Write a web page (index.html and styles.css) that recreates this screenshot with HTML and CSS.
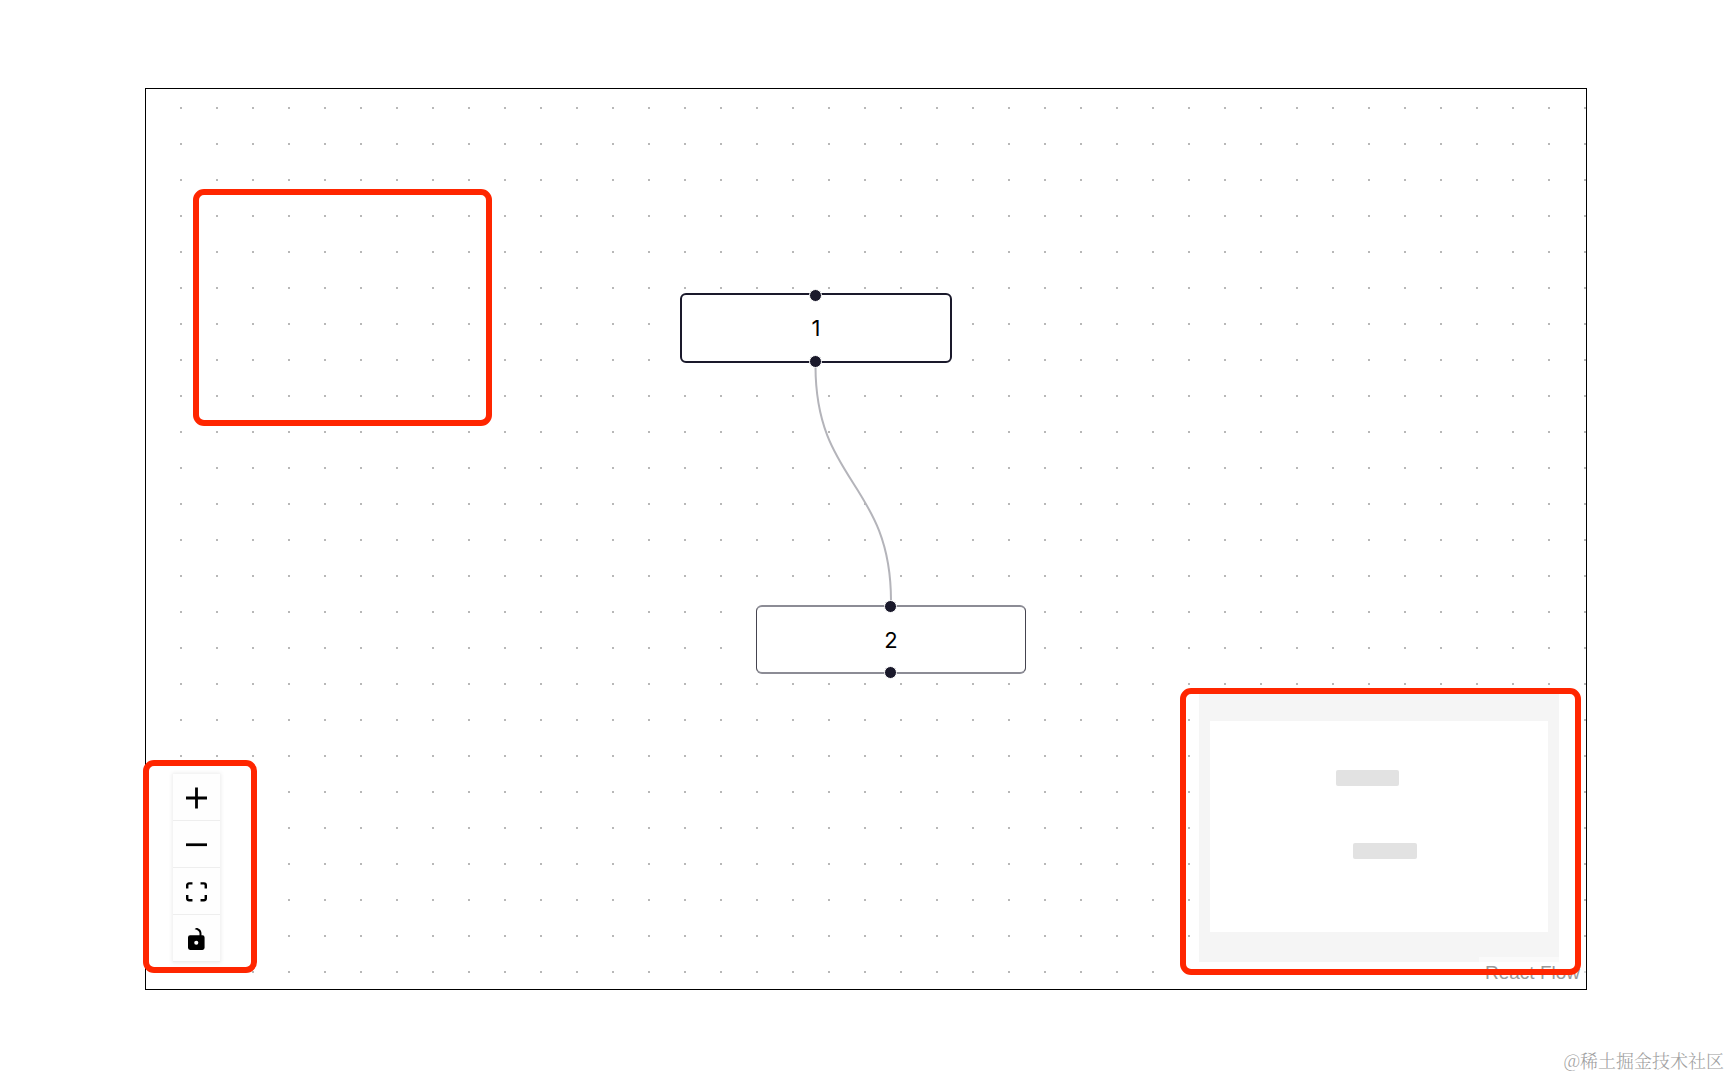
FILE: index.html
```html
<!DOCTYPE html>
<html lang="zh-CN">
<head>
<meta charset="utf-8">
<meta name="viewport" content="width=device-width, initial-scale=1">
<title>React Flow</title>
<link rel="stylesheet" href="styles.css">
</head>
<body>
<main class="page">
  <section class="flow" aria-label="Flow canvas">
    <svg class="flow-layer" aria-hidden="true">
      <defs>
        <pattern id="dots" width="36" height="36" patternUnits="userSpaceOnUse">
          <rect class="dot" x="34" y="18" width="2" height="2"/>
        </pattern>
      </defs>
      <rect width="100%" height="100%" fill="url(#dots)"/>
      <path class="edge" d="M669.500 277C669.500 394 745 394 745 512"/>
    </svg>

    <div class="node node-one selected">
      <span class="handle handle-top"></span>1<span class="handle handle-bottom"></span>
    </div>
    <div class="node node-two">
      <span class="handle handle-top"></span>2<span class="handle handle-bottom"></span>
    </div>

    <div class="controls">
      <button type="button" class="control" aria-label="zoom in">
        <svg width="21" height="22" viewBox="0 0 32 32"><path d="M32 18.133H18.133V32h-4.266V18.133H0v-4.266h13.867V0h4.266v13.867H32z"/></svg>
      </button>
      <button type="button" class="control" aria-label="zoom out">
        <svg width="21" height="4" viewBox="0 0 32 5"><path d="M0 0h32v4.2H0z"/></svg>
      </button>
      <button type="button" class="control" aria-label="fit view">
        <svg width="21" height="20" viewBox="0 0 32 30"><path d="M3.692 4.63c0-.53.4-.938.939-.938h5.215V0H4.708C2.130 0 0 2.054 0 4.630v5.216h3.692V4.631zM27.354 0h-5.200v3.692h5.170c.530 0 .984.400.984.939v5.215H32V4.631A4.624 4.624 0 0027.354 0zm.954 24.830c0 .532-.400.940-.939.940h-5.215v3.768h5.215c2.577 0 4.631-2.130 4.631-4.707v-5.139h-3.692v5.139zm-23.677.940c-.531 0-.939-.400-.939-.940v-5.138H0v5.139c0 2.577 2.130 4.707 4.708 4.707h5.138V25.770H4.631z"/></svg>
      </button>
      <button type="button" class="control" aria-label="toggle interactivity">
        <svg width="17" height="22" viewBox="0 0 25 32"><path d="M21.333 10.667H19.810V7.619C19.810 3.429 16.380 0 12.190 0c-4.114 1.828-1.370 2.133.305 2.438 1.676.305 4.420 2.590 4.420 5.181v3.048H3.047A3.056 3.056 0 000 13.714v15.238A3.056 3.056 0 003.048 32h18.285a3.056 3.056 0 003.048-3.048V13.714a3.056 3.056 0 00-3.048-3.047zM12.190 24.533a3.056 3.056 0 01-3.047-3.047 3.056 3.056 0 013.047-3.048 3.056 3.056 0 013.048 3.048 3.056 3.056 0 01-3.048 3.047z"/></svg>
      </button>
    </div>

    <svg class="minimap" width="360" height="270" viewBox="0 0 360 270" role="img" aria-label="Mini map">
      <rect class="minimap-node" x="137" y="78" width="63" height="16" rx="2"/>
      <rect class="minimap-node" x="154" y="151" width="64" height="16" rx="2"/>
      <path class="minimap-mask" fill-rule="evenodd" d="M0 0h360v270H0zM11 29h338v211H11z"/>
    </svg>

    <a class="attribution" href="https://reactflow.dev">React Flow</a>

    <div class="mark mark-empty"></div>
    <div class="mark mark-controls"></div>
    <div class="mark mark-minimap"></div>
  </section>
</main>
<footer class="watermark">@稀土掘金技术社区</footer>
</body>
</html>
```
FILE: styles.css
```css
* {
  box-sizing: border-box;
}

body {
  margin: 0;
  background: #fff;
  color: #000;
  font-family: Inter, "Liberation Sans", sans-serif;
}

.page {
  display: flex;
  min-height: 100vh;
  padding: 88px 143px 88px 145px;
}

.flow {
  position: relative;
  flex: 1;
  border: 1px solid #000;
}

.flow-layer {
  position: absolute;
  inset: 0;
  width: 100%;
  height: 100%;
}

.dot {
  fill: #b8b8b8;
}

.edge {
  fill: none;
  stroke: #b4b4ba;
  stroke-width: 2;
}

/* Nodes */
.node {
  position: absolute;
  display: flex;
  align-items: center;
  justify-content: center;
  width: 270px;
  height: 69px;
  border: solid #8c8c95;
  border-width: 2px 1px;
  border-right-color: #45444f;
  border-left-color: #45444f;
  border-radius: 6px;
  background: #fff;
  font-size: 22px;
  line-height: 28px;
}

.node.selected {
  width: 272px;
  height: 70px;
  border: 2px solid #1a192b;
}

.node-one {
  left: 534px;
  top: 204px;
}

.node-two {
  left: 610px;
  top: 516px;
}

.handle {
  position: absolute;
  left: 50%;
  width: 13px;
  height: 13px;
  margin-left: -7px;
  border: 1px solid #fff;
  border-radius: 50%;
  background: #1a192b;
}

.handle-top {
  top: -7px;
}

.selected .handle-top {
  top: -6px;
}

.handle-bottom {
  bottom: -7px;
}

/* Zoom controls */
.controls {
  position: absolute;
  left: 27px;
  bottom: 27px;
  display: flex;
  flex-direction: column;
  box-shadow: 0 0 4px 1px rgba(0, 0, 0, 0.08);
}

.control {
  display: flex;
  align-items: center;
  justify-content: center;
  width: 47px;
  height: 47px;
  padding: 1px 0 0;
  border: 0;
  border-bottom: 1px solid #eee;
  background: #fefefe;
  cursor: pointer;
}

/* Minimap and attribution */
.minimap {
  position: absolute;
  right: 27px;
  bottom: 27px;
  background: #fff;
}

.minimap-node {
  fill: #e2e2e2;
}

.minimap-mask {
  fill: #f5f5f5;
}

.attribution {
  position: absolute;
  right: 0;
  bottom: 0;
  padding: 4px 6px;
  background: rgba(255, 255, 255, 0.5);
  color: #999;
  font-family: "Liberation Sans", Arial, sans-serif;
  font-size: 19px;
  line-height: 24px;
  text-decoration: none;
}

/* Highlight frames */
.mark {
  position: absolute;
  border: 6px solid #ff2600;
  border-radius: 11px;
  pointer-events: none;
}

.mark-empty {
  left: 47px;
  top: 100px;
  width: 299px;
  height: 237px;
}

.mark-controls {
  left: -3px;
  bottom: 16px;
  width: 114px;
  height: 213px;
}

.mark-minimap {
  right: 5px;
  bottom: 14px;
  width: 401px;
  height: 287px;
}

.watermark {
  position: absolute;
  right: 6px;
  bottom: 5px;
  color: #a0a0a0;
  font-family: "Noto Serif CJK SC", "Noto Sans CJK SC", serif;
  font-size: 18px;
  font-weight: 300;
  line-height: 26px;
}
```
